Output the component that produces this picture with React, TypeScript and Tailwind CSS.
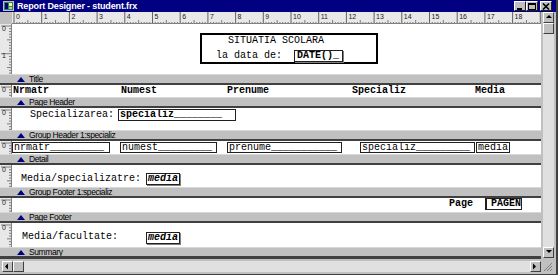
import React from "react";

const MONO = "font-['Liberation_Mono','Courier_New',monospace]";
const SANS = "font-['Liberation_Sans',Arial,sans-serif]";

function TopRuler() {
  const majors = Array.from({ length: 19 }, (_, i) => i);
  const minors = Array.from({ length: 192 }, (_, i) => i);
  return (
    <div className="h-[12px] flex bg-[#c0c0c0]">
      <div className="w-[12px] h-full bg-[#c0c0c0]" />
      <div className="flex-1 h-full bg-[#e8e8e8] border-b border-[#808080] overflow-hidden">
        <svg width="529" height="12" className="block">
          {minors.map((i) => {
            const x = 2 + i * 2.77;
            const h = i % 10 === 0 ? 12 : i % 5 === 0 ? 4 : 2;
            return (
              <line
                key={i}
                x1={x}
                x2={x}
                y1={12 - h}
                y2={12}
                stroke={i % 10 === 0 ? "#404040" : "#606060"}
                strokeWidth="0.8"
              />
            );
          })}
          {majors.map((i) => (
            <text
              key={i}
              x={4 + i * 27.7}
              y={7}
              fontSize="7"
              fontFamily="Liberation Sans, Arial, sans-serif"
              fill="#202020"
            >
              {i}
            </text>
          ))}
        </svg>
      </div>
    </div>
  );
}

function SideRuler({ h, labels }: { h: number; labels: { y: number; t: string }[] }) {
  const ticks = Array.from({ length: Math.ceil(h / 2.77) }, (_, i) => i);
  return (
    <div className="w-[12px] h-full bg-[#e8e8e8] border-r border-[#808080] overflow-hidden">
      <svg width="12" height={h} className="block">
        {ticks.map((i) => {
          const y = 2 + i * 2.77;
          const w = i % 10 === 0 ? 10 : i % 5 === 0 ? 4 : 2;
          return (
            <line key={i} x1={11 - w} x2={11} y1={y} y2={y} stroke="#606060" strokeWidth="0.8" />
          );
        })}
        {labels.map((l) => (
          <text
            key={l.t}
            x={2}
            y={l.y}
            fontSize="7"
            fontFamily="Liberation Sans, Arial, sans-serif"
            fill="#202020"
          >
            {l.t}
          </text>
        ))}
      </svg>
    </div>
  );
}

function Bar({ label }: { label: string }) {
  return (
    <div className="h-[11px] flex flex-col">
      <div className="h-[9px] bg-[#c0c0c0] border-t border-[#d8d8d8] flex items-center pl-[17px] gap-[4px]">
        <svg width="8" height="5" className="block">
          <polygon points="0,5 4,0 8,5" fill="#000080" />
        </svg>
        <span className={`${SANS} text-[8.5px] leading-none tracking-[-0.4px] text-black`}>{label}</span>
      </div>
      <div className="h-[2px] bg-[#404040]" />
    </div>
  );
}

function Field({
  children,
  className = "",
}: {
  children: React.ReactNode;
  className?: string;
}) {
  return (
    <div
      className={`absolute border border-[#202020] bg-white overflow-hidden whitespace-nowrap ${MONO} text-[10px] leading-[10px] text-black ${className}`}
    >
      {children}
    </div>
  );
}

function Label({ children, className = "" }: { children: React.ReactNode; className?: string }) {
  return (
    <div className={`absolute whitespace-nowrap ${MONO} text-[10px] leading-[10px] text-black ${className}`}>
      {children}
    </div>
  );
}

function WinButton({ kind }: { kind: "min" | "max" | "close" }) {
  return (
    <div className="w-[12px] h-[10px] bg-[#c0c0c0] border border-t-white border-l-white border-r-[#202020] border-b-[#202020] flex items-center justify-center">
      <svg width="8" height="7" className="block">
        {kind === "min" && <rect x="1" y="5" width="5" height="2" fill="#000" />}
        {kind === "max" && (
          <>
            <rect x="0.5" y="0.5" width="7" height="6" fill="none" stroke="#000" />
            <rect x="0" y="0" width="8" height="2" fill="#000" />
          </>
        )}
        {kind === "close" && (
          <path d="M1 0.5 L7 6.5 M7 0.5 L1 6.5" stroke="#000" strokeWidth="1.6" />
        )}
      </svg>
    </div>
  );
}

function ScrollBtn({ dir }: { dir: "up" | "down" | "left" | "right" }) {
  const pts =
    dir === "up"
      ? "1,4 4,1 7,4"
      : dir === "down"
      ? "1,1 4,4 7,1"
      : dir === "left"
      ? "4,0.5 1,3.5 4,6.5"
      : "1,0.5 4,3.5 1,6.5";
  return (
    <div className="w-[11px] h-[11px] bg-[#c0c0c0] border border-t-white border-l-white border-r-[#404040] border-b-[#404040] flex items-center justify-center shrink-0">
      <svg width="8" height="7" className="block">
        <polygon points={pts} fill="#000" />
      </svg>
    </div>
  );
}

function Thumb() {
  return (
    <div className="w-[11px] h-[11px] bg-[#c0c0c0] border border-t-white border-l-white border-r-[#404040] border-b-[#404040] shrink-0" />
  );
}

export default function App() {
  return (
    <div className="w-[558px] h-[275px] bg-[#c0c0c0] flex flex-col overflow-hidden border-r-2 border-b border-[#404040]">
      {/* Title bar */}
      <div className="h-[12px] bg-[#000080] flex items-center pl-[3px] pr-[4px]">
        <div className="w-[11px] h-[10px] bg-[#008080] border border-[#c0c0c0] flex items-center justify-center">
          <svg width="9" height="8" className="block">
            <rect x="0" y="0" width="9" height="8" fill="#2e8b57" />
            <rect x="1" y="1" width="3" height="6" fill="#000080" />
            <rect x="5" y="1" width="3" height="3" fill="#ffff80" />
            <rect x="5" y="5" width="3" height="2" fill="#c0c0c0" />
          </svg>
        </div>
        <span className={`${SANS} ml-[3px] text-[9px] leading-none font-bold tracking-[-0.15px] text-white`}>
          Report Designer - student.frx
        </span>
        <div className="flex-1" />
        <div className="flex items-center">
          <WinButton kind="min" />
          <WinButton kind="max" />
          <div className="w-[2px]" />
          <WinButton kind="close" />
        </div>
      </div>

      {/* main area */}
      <div className="flex h-[246px]">
        <div className="w-[541px] flex flex-col">
          <TopRuler />

          {/* Title section */}
          <div className="h-[50px] flex bg-white">
            <SideRuler h={50} labels={[{ y: 7, t: "0" }, { y: 34, t: "1" }]} />
            <div className="flex-1 relative">
              <div className="absolute left-[188px] top-[9px] w-[178px] h-[31px] border-2 border-black flex flex-col">
                <div className={`${MONO} text-[10px] leading-[10px] pl-[26px] pt-[1px] text-black whitespace-nowrap`}>
                  SITUATIA SCOLARA
                </div>
                <div className="flex items-center pl-[14px] mt-[4px]">
                  <span className={`${MONO} text-[10px] leading-[10px] text-black whitespace-nowrap`}>la data de:</span>
                  <div
                    className={`ml-[12px] w-[49px] h-[12px] border border-[#202020] shadow-[1px_1px_0_#808080] ${MONO} text-[10px] leading-[10px] font-bold text-black whitespace-nowrap overflow-hidden pl-[2px]`}
                  >
                    DATE()_
                  </div>
                </div>
              </div>
            </div>
          </div>
          <Bar label="Title" />

          {/* Page header */}
          <div className="h-[12px] flex bg-white">
            <SideRuler h={12} labels={[{ y: 7, t: "0" }]} />
            <div className="flex-1 relative">
              <Label className="left-[1px] top-[1px] font-bold">Nrmatr</Label>
              <Label className="left-[109px] top-[1px] font-bold">Numest</Label>
              <Label className="left-[215px] top-[1px] font-bold">Prenume</Label>
              <Label className="left-[340px] top-[1px] font-bold">Specializ</Label>
              <Label className="left-[463px] top-[1px] font-bold">Media</Label>
            </div>
          </div>
          <Bar label="Page Header" />

          {/* Group header */}
          <div className="h-[22px] flex bg-white">
            <SideRuler h={22} labels={[{ y: 7, t: "0" }]} />
            <div className="flex-1 relative">
              <Label className="left-[18px] top-[2px]">Specializarea:</Label>
              <Field className="left-[106px] top-[1px] w-[118px] h-[12px] font-bold pl-[1px]">
                specializ________
              </Field>
            </div>
          </div>
          <Bar label="Group Header 1:specializ" />

          {/* Detail */}
          <div className="h-[13px] flex bg-white">
            <SideRuler h={13} labels={[{ y: 7, t: "0" }]} />
            <div className="flex-1 relative">
              <Field className="left-[0px] top-[1px] w-[98px] h-[11px] pl-[1px]">nrmatr_________</Field>
              <Field className="left-[108px] top-[1px] w-[97px] h-[11px] pl-[1px]">numest_________</Field>
              <Field className="left-[215px] top-[1px] w-[115px] h-[11px] pl-[1px]">prenume___________</Field>
              <Field className="left-[348px] top-[1px] w-[115px] h-[11px] pl-[1px]">specializ_________</Field>
              <Field className="left-[464px] top-[1px] w-[34px] h-[11px] pl-[1px]">media</Field>
            </div>
          </div>
          <Bar label="Detail" />

          {/* Group footer */}
          <div className="h-[22px] flex bg-white">
            <SideRuler h={22} labels={[{ y: 7, t: "0" }]} />
            <div className="flex-1 relative">
              <Label className="left-[9px] top-[9px]">Media/specializatre:</Label>
              <Field className="left-[134px] top-[8px] w-[34px] h-[12px] font-bold italic pl-[1px] shadow-[1px_1px_0_#808080]">
                media
              </Field>
            </div>
          </div>
          <Bar label="Group Footer 1:specializ" />

          {/* Page footer */}
          <div className="h-[14px] flex bg-white">
            <SideRuler h={14} labels={[{ y: 7, t: "0" }]} />
            <div className="flex-1 relative">
              <Label className="left-[437px] top-[1px] font-bold">Page</Label>
              <Field className="left-[473px] top-[0px] w-[37px] h-[12px] font-bold pl-[4px] border-l-2">PAGEN</Field>
            </div>
          </div>
          <Bar label="Page Footer" />

          {/* Summary */}
          <div className="h-[24px] flex bg-white">
            <SideRuler h={24} labels={[{ y: 7, t: "0" }]} />
            <div className="flex-1 relative">
              <Label className="left-[10px] top-[9px]">Media/facultate:</Label>
              <Field className="left-[134px] top-[9px] w-[34px] h-[12px] font-bold italic pl-[1px] shadow-[1px_1px_0_#808080]">
                media
              </Field>
            </div>
          </div>
          <Bar label="Summary" />
        </div>

        {/* vertical scrollbar */}
        <div className="w-[15px] flex flex-col pl-[2px] pt-[0px]">
          <ScrollBtn dir="up" />
          <Thumb />
          <div className="flex-1 w-[11px] bg-[#e0e0e0]" />
          <ScrollBtn dir="down" />
        </div>
      </div>

      {/* horizontal scrollbar */}
      <div className="h-[1px] bg-[#404040] w-[541px]" />
      <div className="flex items-center pt-[2px] pl-[2px]">
        <ScrollBtn dir="left" />
        <Thumb />
        <div className="w-[506px] h-[11px] bg-[#e0e0e0]" />
        <ScrollBtn dir="right" />
        <div className="w-[12px] h-[11px] flex items-end justify-end">
          <svg width="10" height="10" className="block">
            <path d="M9 1 L1 9 M9 4 L4 9 M9 7 L7 9" stroke="#808080" strokeWidth="1" />
          </svg>
        </div>
      </div>
    </div>
  );
}
